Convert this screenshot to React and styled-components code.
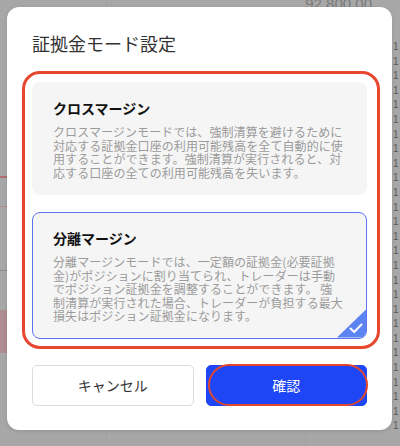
import React from 'react';
import styled, { createGlobalStyle } from 'styled-components';

const GlobalStyle = createGlobalStyle`
  html, body {
    margin: 0;
    padding: 0;
  }
  body {
    font-family: "Noto Sans CJK JP", "Noto Sans", sans-serif;
    -webkit-font-smoothing: antialiased;
  }
`;

const MODES = [
  {
    id: 'cross',
    title: 'クロスマージン',
    text: 'クロスマージンモードでは、強制清算を避けるために対応する証拠金口座の利用可能残高を全て自動的に使用することができます。強制清算が実行されると、対応する口座の全ての利用可能残高を失います。',
  },
  {
    id: 'isolated',
    title: '分離マージン',
    text: '分離マージンモードでは、一定額の証拠金(必要証拠金)がポジションに割り当てられ、トレーダーは手動でポジション証拠金を調整することができます。 強制清算が実行された場合、トレーダーが負担する最大損失はポジション証拠金になります。',
  },
];

export default function App() {
  const selected = 'isolated';
  return (
    <>
      <GlobalStyle />
      <Screen>
        <Behind>
          <PriceRow>
            <Price>92,800.00</Price>
          </PriceRow>
          <BehindBody>
            <LeftStrip />
            <TickColumn>
              {Array.from({ length: 27 }).map((_, i) => (
                <span key={i}>1</span>
              ))}
            </TickColumn>
          </BehindBody>
        </Behind>

        <Overlay>
          <Modal>
            <Title>証拠金モード設定</Title>
            <Highlight>
              {MODES.map((m) => (
                <ModeCard key={m.id} $active={m.id === selected}>
                  <ModeTitle>{m.title}</ModeTitle>
                  <ModeText>{m.text}</ModeText>
                  {m.id === selected && (
                    <CheckCorner>
                      <svg width="14" height="11" viewBox="0 0 14 11">
                        <path d="M1.5 5.5 L5.2 9 L12.5 1.5" fill="none" stroke="#fff" strokeWidth="2" strokeLinecap="round" strokeLinejoin="round" />
                      </svg>
                    </CheckCorner>
                  )}
                </ModeCard>
              ))}
            </Highlight>
            <Buttons>
              <CancelButton>キャンセル</CancelButton>
              <ConfirmButton>
                確認
                <Circled />
              </ConfirmButton>
            </Buttons>
          </Modal>
        </Overlay>
      </Screen>
    </>
  );
}

const Screen = styled.div`
  position: relative;
  width: 400px;
  height: 446px;
  overflow: hidden;
  background: #a7a7a7;
`;

const Behind = styled.div`
  display: flex;
  flex-direction: column;
  height: 100%;
  background-image: linear-gradient(90deg, transparent 106px, #a2a2a2 106px, #a2a2a2 107px, transparent 107px),
    linear-gradient(90deg, transparent 305px, #a2a2a2 305px, #a2a2a2 306px, transparent 306px);
`;

const PriceRow = styled.div`
  display: flex;
  justify-content: flex-end;
  padding-right: 28px;
  height: 10px;
`;

const Price = styled.span`
  font-family: "Liberation Sans", Arial, sans-serif;
  font-size: 15px;
  color: #7b7b7b;
  margin-top: -6px;
  line-height: 20px;
`;

const BehindBody = styled.div`
  flex: 1;
  display: flex;
  justify-content: space-between;
`;

const LeftStrip = styled.div`
  width: 8px;
  margin-top: 158px;
  height: 185px;
  background-image:
    linear-gradient(180deg, transparent 8px, #b0706f 8px, #b0706f 10px, transparent 10px),
    linear-gradient(180deg, transparent 38px, #b58a8a 38px, #b58a8a 39px, transparent 39px),
    linear-gradient(180deg, transparent 102px, #8e8e8e 102px, #8e8e8e 103px, transparent 103px),
    linear-gradient(180deg, transparent 142px, #af8c8f 142px, #af8c8f 185px);
`;

const TickColumn = styled.div`
  width: 8px;
  display: flex;
  flex-direction: column;
  padding-top: 30px;
  font-family: "Liberation Sans", Arial, sans-serif;
  font-size: 10px;
  line-height: 14.6px;
  color: #5a5a5a;
  span {
    display: block;
    padding-left: 1px;
  }
`;

const Overlay = styled.div`
  position: absolute;
  inset: 0;
  display: flex;
  padding: 7px 8px 16px 7px;
`;

const Modal = styled.div`
  flex: 1;
  display: flex;
  flex-direction: column;
  background: #fff;
  border-radius: 12px;
  padding: 23px 25px 25px;
  box-shadow: 0 1px 4px rgba(0, 0, 0, 0.12);
`;

const Title = styled.h1`
  margin: 0 0 15px;
  font-size: 18px;
  line-height: 26px;
  font-weight: 400;
  color: #333;
`;

const Highlight = styled.div`
  display: flex;
  flex-direction: column;
  gap: 17px;
  margin: 0 -13px 0 -10px;
  padding: 8px 10px 7px 7px;
  border: 3px solid #e8472f;
  border-radius: 18px;
`;

const ModeCard = styled.div`
  position: relative;
  overflow: hidden;
  background: #f5f5f5;
  border-radius: 8px;
  border: 1px solid ${(p) => (p.$active ? '#5b72f2' : 'transparent')};
  padding: 15px 22px 15px 20px;
`;

const ModeTitle = styled.div`
  font-size: 14px;
  line-height: 20px;
  font-weight: 700;
  color: #111;
  margin-bottom: 7px;
`;

const ModeText = styled.p`
  margin: 0;
  font-size: 12px;
  line-height: 13.5px;
  color: #9b9b9b;
  letter-spacing: 0.08px;
`;

const CheckCorner = styled.div`
  position: absolute;
  right: 0;
  bottom: 0;
  width: 29px;
  height: 28px;
  background: #5b83f1;
  clip-path: polygon(100% 0, 100% 100%, 0 100%);
  display: flex;
  align-items: flex-end;
  justify-content: flex-end;
  padding: 0 3px 4px 0;
  box-sizing: border-box;
`;

const Buttons = styled.div`
  display: grid;
  grid-template-columns: 1fr 1fr;
  gap: 12px;
  margin-top: 16px;
`;

const BaseButton = styled.button`
  position: relative;
  height: 41px;
  border-radius: 5px;
  font-family: "Noto Sans CJK JP", "Noto Sans", sans-serif;
  font-size: 14px;
  cursor: pointer;
`;

const CancelButton = styled(BaseButton)`
  background: #fff;
  border: 1px solid #dcdcdc;
  color: #333;
`;

const ConfirmButton = styled(BaseButton)`
  background: #1f46f6;
  border: 1px solid #1f46f6;
  color: #fff;
`;

const Circled = styled.span`
  position: absolute;
  inset: -2px -2px -1px 1px;
  border: 2.5px solid #e0472f;
  border-radius: 21px;
  pointer-events: none;
`;
